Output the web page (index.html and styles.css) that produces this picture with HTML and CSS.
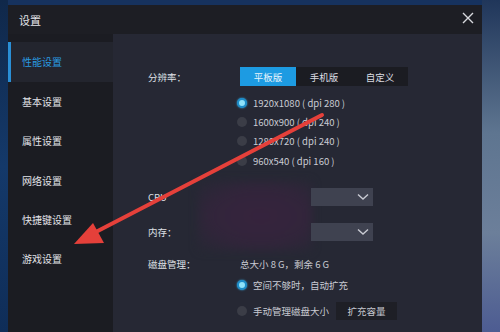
FILE: index.html
```html
<!DOCTYPE html>
<html lang="zh">
<head>
<meta charset="utf-8">
<title>设置</title>
<link rel="stylesheet" href="styles.css">
</head>
<body>
<div class="desk">
  <div class="dialog">
    <div class="titlebar">
      <span class="title">设置</span>
      <svg class="close" width="12" height="12" viewBox="0 0 12 12"><path d="M1 1L11 11M11 1L1 11" stroke="#d8d9de" stroke-width="1.4" fill="none"/></svg>
    </div>
    <div class="main">
      <div class="sidebar">
        <div class="nav-item active">性能设置</div>
        <div class="nav-item">基本设置</div>
        <div class="nav-item">属性设置</div>
        <div class="nav-item">网络设置</div>
        <div class="nav-item">快捷键设置</div>
        <div class="nav-item">游戏设置</div>
      </div>
      <div class="content">
        <div class="row seg-row">
          <div class="label">分辨率：</div>
          <div class="segment">
            <span class="seg on">平板版</span>
            <span class="seg">手机版</span>
            <span class="seg">自定义</span>
          </div>
        </div>
        <div class="radios">
          <div class="radio-row"><span class="radio checked"></span>1920x1080 ( dpi 280 )</div>
          <div class="radio-row"><span class="radio"></span>1600x900 ( dpi 240 )</div>
          <div class="radio-row"><span class="radio"></span>1280x720 ( dpi 240 )</div>
          <div class="radio-row"><span class="radio"></span>960x540 ( dpi 160 )</div>
        </div>
        <div class="row sel-row cpu">
          <div class="label">CPU</div>
          <div class="select"><svg width="12" height="8" viewBox="0 0 12 8"><path d="M1 1.5L6 6L11 1.5" stroke="#c9cbd3" stroke-width="1.4" fill="none"/></svg></div>
        </div>
        <div class="row sel-row mem">
          <div class="label">内存：</div>
          <div class="select"><svg width="12" height="8" viewBox="0 0 12 8"><path d="M1 1.5L6 6L11 1.5" stroke="#c9cbd3" stroke-width="1.4" fill="none"/></svg></div>
        </div>
        <div class="row disk-row">
          <div class="label">磁盘管理：</div>
          <div class="value">总大小 8 G，剩余 6 G</div>
        </div>
        <div class="radio-row disk-opt"><span class="radio checked"></span>空间不够时，自动扩充</div>
        <div class="radio-row disk-opt2"><span class="radio"></span>手动管理磁盘大小<span class="btn">扩充容量</span></div>
        <div class="blur"></div>
      </div>
    </div>
  </div>
  <svg class="arrow" width="500" height="332" viewBox="0 0 500 332">
    <line x1="322" y1="115" x2="90" y2="235" stroke="#e5403a" stroke-width="4" stroke-linecap="round"/>
    <polygon points="74,244 93,223 104,243" fill="#e5403a"/>
  </svg>
</div>
</body>
</html>
```
FILE: styles.css
```css
html, body {
  margin: 0;
  padding: 0;
}
body {
  width: 500px;
  height: 332px;
  overflow: hidden;
  font-family: "Noto Sans CJK SC", "Noto Sans", sans-serif;
  font-size: 10px;
}
.desk {
  position: relative;
  width: 500px;
  height: 332px;
  background: #16325e;
  padding: 5px 0 0 8px;
  box-sizing: border-box;
}
.desk::after {
  content: "";
  position: absolute;
  right: 0;
  top: 0;
  width: 18px;
  height: 332px;
  background: linear-gradient(180deg, #20365a 0%, #5e7590 40%, #6c7f9a 70%, #4d5c92 100%);
}
.desk::before {
  content: "";
  position: absolute;
  left: 0;
  top: 0;
  width: 8px;
  height: 332px;
  background: linear-gradient(180deg, #10284a 0%, #14396a 50%, #0f2d58 100%);
}
.dialog {
  width: 474px;
  height: 327px;
  display: flex;
  flex-direction: column;
  background: #1c1d23;
}
.titlebar {
  height: 29px;
  flex: none;
  display: flex;
  align-items: center;
  justify-content: space-between;
  padding: 0 8px 0 11px;
  background: #1d1e24;
}
.title {
  color: #e4e5ea;
  font-size: 11px;
}
.close {
  display: block;
  margin-top: -4px;
}
.main {
  flex: 1;
  display: flex;
}
.sidebar {
  width: 105px;
  flex: none;
  padding-top: 8px;
  background: #1b1c22;
}
.nav-item {
  height: 39.3px;
  line-height: 39px;
  padding-left: 14px;
  color: #e2e3e8;
  font-size: 10px;
}
.nav-item.active {
  height: 40px;
  line-height: 40px;
  background: #23252e;
  color: #2a9be0;
  box-shadow: inset 3px 0 0 #2a8fd6;
}
.content {
  position: relative;
  flex: 1;
  background: #262834;
  padding: 33px 0 0 35px;
  color: #d5d7de;
}
.row {
  display: flex;
  align-items: center;
}
.label {
  width: 92px;
  flex: none;
  font-size: 9.5px;
  color: #dfe0e6;
}
.segment {
  display: flex;
  height: 19px;
  background: #1b1c22;
}
.seg {
  width: 56px;
  display: flex;
  align-items: center;
  justify-content: center;
  color: #dcdde3;
  font-size: 9.5px;
}
.seg.on {
  background: #1d9be2;
  color: #e8f4fc;
}
.radios {
  padding: 7px 0 0 92px;
}
.radio-row {
  display: flex;
  align-items: center;
  height: 19.4px;
  color: #c9cbd3;
  font-size: 9.5px;
}
.radio {
  width: 10px;
  height: 10px;
  border-radius: 50%;
  background: #3b3d47;
  margin: 0 6px 0 -3px;
  box-sizing: border-box;
  flex: none;
}
.radio.checked {
  background: #8fe2fa;
  border: 2px solid #1d8cc8;
  box-shadow: 0 0 2px #3ab4ee;
}
.sel-row.cpu {
  margin-top: 17px;
  height: 18px;
}
.sel-row.mem {
  margin-top: 17px;
  height: 18px;
}
.sel-row .label {
  width: 163px;
}
.select {
  position: relative;
  z-index: 1;
  width: 62px;
  height: 18px;
  background: #3f4250;
  display: flex;
  align-items: center;
  justify-content: flex-end;
  padding-right: 4px;
  box-sizing: border-box;
}
.select svg {
  display: block;
}
.disk-row {
  margin-top: 15px;
  height: 16px;
}
.value {
  font-size: 9.5px;
  color: #c9cbd3;
}
.disk-opt {
  margin: 3px 0 0 92px;
  height: 20px;
}
.disk-opt2 {
  margin: 6px 0 0 92px;
  height: 20px;
}
.btn {
  margin-left: 7px;
  width: 61px;
  height: 18px;
  display: flex;
  align-items: center;
  justify-content: center;
  background: #1e1f26;
  color: #c5c7ce;
  font-size: 9.5px;
}
.blur {
  position: absolute;
  left: 85px;
  top: 147px;
  width: 114px;
  height: 70px;
  background: radial-gradient(ellipse at 55% 50%, #36233d 0%, #32253b 55%, rgba(38,40,52,0.3) 100%);
  filter: blur(4px);
}
.arrow {
  position: absolute;
  left: 0;
  top: 0;
  z-index: 5;
  pointer-events: none;
}
```
